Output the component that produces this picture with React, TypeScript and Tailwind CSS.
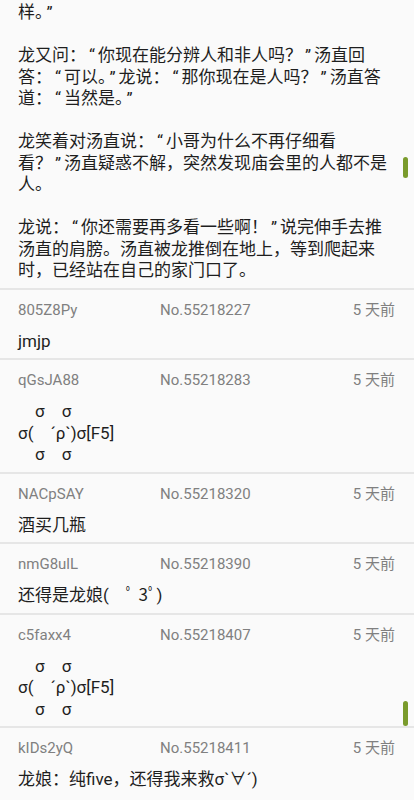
const threadLines = [
  '样。”',
  '',
  '龙又问：“你现在能分辨人和非人吗？”汤直回',
  '答：“可以。”龙说：“那你现在是人吗？”汤直答',
  '道：“当然是。”',
  '',
  '龙笑着对汤直说：“小哥为什么不再仔细看',
  '看？”汤直疑惑不解，突然发现庙会里的人都不是',
  '人。',
  '',
  '龙说：“你还需要再多看一些啊！”说完伸手去推',
  '汤直的肩膀。汤直被龙推倒在地上，等到爬起来',
  '时，已经站在自己的家门口了。'
];

const f5 = '　σ　σ\nσ(　´ρ`)σ[F5]\n　σ　σ';

interface Reply {
  cookie: string;
  no: string;
  time: string;
  content: string;
}

const replies: Reply[] = [
  { cookie: '805Z8Py', no: 'No.55218227', time: '5 天前', content: 'jmjp' },
  { cookie: 'qGsJA88', no: 'No.55218283', time: '5 天前', content: f5 },
  { cookie: 'NACpSAY', no: 'No.55218320', time: '5 天前', content: '酒买几瓶' },
  { cookie: 'nmG8ulL', no: 'No.55218390', time: '5 天前', content: '还得是龙娘(　ﾟ 3ﾟ)' },
  { cookie: 'c5faxx4', no: 'No.55218407', time: '5 天前', content: f5 },
  { cookie: 'kIDs2yQ', no: 'No.55218411', time: '5 天前', content: '龙娘：纯five，还得我来救σ`∀´)' }
];

// curly quotes sit a little wider in the original than Roboto draws them
const Line = ({ text }: { text: string }) => (
  <>
    {text.split(/([“”])/).map((part, i) =>
      part === '“' || part === '”' ? (
        <span key={i} className="mx-[3px]">
          {part}
        </span>
      ) : (
        part
      )
    )}
  </>
);

const ReplyRow = ({ cookie, no, time, content }: Reply) => (
  <div className="border-t-2 border-[#e6e6e6] px-[18px] pt-[10px] pb-[6px]">
    <div className="flex items-center text-[15px] leading-[20px] text-[#808080]">
      <span className="w-[142px] shrink-0">{cookie}</span>
      <span className="flex-1">{no}</span>
      <span className="pr-[1px]">{time}</span>
    </div>
    <div className="mt-[11px] text-[17px] leading-[21.5px] text-[#1e1e1e] whitespace-pre-wrap">
      {content}
    </div>
  </div>
);

export default function App() {
  return (
    <div
      className="relative h-[800px] w-[414px] overflow-hidden bg-[#fafafa]"
      style={{ fontFamily: 'Roboto, "Noto Sans CJK SC", sans-serif' }}
    >
      <div className="px-[18px] pt-[2px] pb-[6px] text-[17px] leading-[21.5px] text-[#1e1e1e]">
        {threadLines.map((line, i) => (
          <div key={i} className="h-[21.5px] whitespace-nowrap">
            <Line text={line} />
          </div>
        ))}
      </div>
      {replies.map((r) => (
        <ReplyRow key={r.no} {...r} />
      ))}
      <div className="absolute left-[403px] top-[157px] h-[21px] w-[5px] rounded-full bg-[#7a9b2c]" />
      <div className="absolute left-[403px] top-[701px] h-[25px] w-[5px] rounded-full bg-[#7a9b2c]" />
    </div>
  );
}
